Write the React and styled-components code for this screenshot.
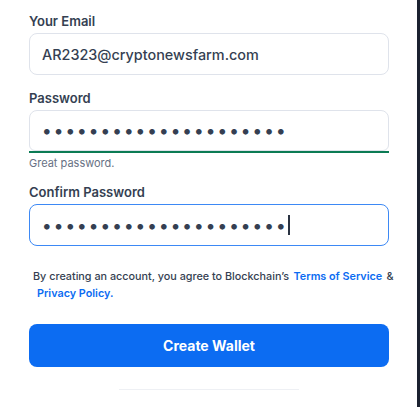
import React from "react";
import styled, { createGlobalStyle } from "styled-components";

const Global = createGlobalStyle`
  html, body { margin: 0; padding: 0; background: #1b2130; }
  body { font-family: Inter, "Noto Sans", sans-serif; -webkit-font-smoothing: antialiased; }
  * { box-sizing: border-box; }
`;

const Panel = styled.div`
  width: 417px;
  min-height: 407px;
  background: #ffffff;
  padding: 11px 28px 0 29px;
  display: flex;
  flex-direction: column;
`;

const Field = styled.div`
  display: flex;
  flex-direction: column;
  margin-bottom: ${(p) => p.$mb || 0}px;
`;

const Label = styled.label`
  font-size: 13px;
  font-weight: 600;
  line-height: 20px;
  color: #353f52;
  margin-bottom: 2px;
`;

const InputWrap = styled.div`
  position: relative;
  display: flex;
  flex-direction: column;
`;

const Input = styled.input`
  width: 100%;
  height: ${(p) => (p.$bar ? 41 : 42)}px;
  padding: 0 12px;
  border: 1px solid ${(p) => (p.$focus ? "#3d89f5" : "#dfe3eb")};
  border-radius: 8px;
  ${(p) => p.$bar && "border-bottom-left-radius: 6px; border-bottom-right-radius: 6px;"}
  background: #fff;
  font-family: Inter, "Noto Sans", sans-serif;
  font-size: ${(p) => (p.type === "password" ? 18 : 14.4)}px;
  font-weight: 500;
  color: #353f52;
  outline: none;
  caret-color: transparent;
  letter-spacing: ${(p) => (p.type === "password" ? "2.1px" : "normal")};
`;

const StrengthBar = styled.div`
  height: 2px;
  background: #0b7b54;
`;

const Helper = styled.div`
  margin-top: 2px;
  font-size: 11px;
  line-height: 16px;
  font-weight: 400;
  color: #677184;
`;

const Caret = styled.span`
  position: absolute;
  top: 11px;
  width: 1.5px;
  height: 20px;
  background: #2a3342;
`;

const Terms = styled.p`
  margin: 22px -14px 0 0;
  padding-left: 4px;
  font-size: 10.8px;
  line-height: 17px;
  font-weight: 500;
  color: #353f52;
`;

const Link = styled.a`
  color: #0c6cf2;
  font-weight: 600;
  text-decoration: none;
  margin: 0 1.5px 0 ${(p) => p.$ml || 1.5}px;
`;

const Button = styled.button`
  margin-top: 22px;
  height: 43px;
  width: 100%;
  border: none;
  border-radius: 8px;
  background: #0c6cf2;
  color: #ffffff;
  font-family: Inter, "Noto Sans", sans-serif;
  font-size: 14px;
  font-weight: 700;
  cursor: pointer;
`;

const Divider = styled.div`
  align-self: center;
  width: 180px;
  height: 1px;
  margin-top: 22px;
  background: #eef0f4;
`;

const pw = "a".repeat(21);

export default function App() {
  return (
    <>
      <Global />
      <Panel>
        <Field $mb={13}>
          <Label>Your Email</Label>
          <Input type="email" readOnly value="AR2323@cryptonewsfarm.com" />
        </Field>
        <Field $mb={11}>
          <Label>Password</Label>
          <InputWrap>
            <Input type="password" readOnly value={pw} $bar />
            <StrengthBar />
          </InputWrap>
          <Helper>Great password.</Helper>
        </Field>
        <Field>
          <Label>Confirm Password</Label>
          <InputWrap>
            <Input type="password" readOnly value={pw} $focus />
            <Caret style={{ left: 259 }} />
          </InputWrap>
        </Field>
        <Terms>
          By creating an account, you agree to Blockchain’s{" "}
          <Link href="#">Terms of Service</Link> &amp;{" "}
          <Link href="#" $ml={4}>Privacy Policy.</Link>
        </Terms>
        <Button type="button">Create Wallet</Button>
        <Divider />
      </Panel>
    </>
  );
}
